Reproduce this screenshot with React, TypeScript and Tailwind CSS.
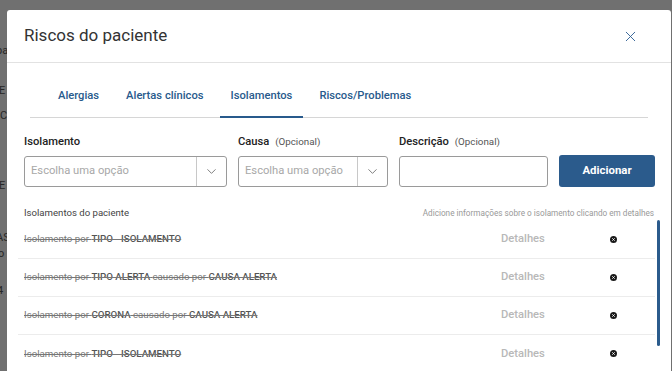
import { ChevronDown, X } from "lucide-react";

const rows = [
  { tipo: "TIPO - ISOLAMENTO", causa: null },
  { tipo: "TIPO ALERTA", causa: "CAUSA ALERTA" },
  { tipo: "CORONA", causa: "CAUSA ALERTA" },
  { tipo: "TIPO - ISOLAMENTO", causa: null },
];

const tabs = ["Alergias", "Alertas clínicos", "Isolamentos", "Riscos/Problemas"];

function Select({ width }: { width: string }) {
  return (
    <div
      className={`flex h-[31px] ${width} items-stretch rounded-[3px] border border-[#9a9a9a] bg-white`}
    >
      <span className="flex flex-1 items-center pl-[6px] text-[11.2px] text-[#a8a8a8]">
        Escolha uma opção
      </span>
      <span className="flex w-[30px] items-center justify-center border-l border-[#c8c8c8] text-[#555]">
        <ChevronDown size={15} strokeWidth={1.2} />
      </span>
    </div>
  );
}

function RemoveIcon() {
  return (
    <svg width="7" height="7" viewBox="0 0 8 8">
      <circle cx="4" cy="4" r="4" fill="#1a1a1a" />
      <path d="M2.6 2.6 5.4 5.4 M5.4 2.6 2.6 5.4" stroke="#fff" strokeWidth="1" />
    </svg>
  );
}

export default function App() {
  return (
    <div className="flex h-[371px] w-[672px] items-start overflow-hidden bg-[#707070] font-['Roboto',sans-serif]">
      {/* page behind the overlay */}
      <div className="relative h-[371px] w-[7px] shrink-0 overflow-hidden text-[11px] text-[#262626]">
        <span className="absolute left-[-4px] top-[43px]">pa</span>
        <span className="absolute left-[-1px] top-[83px]">E</span>
        <span className="absolute left-[-3px] top-[108px]">IC</span>
        <span className="absolute left-[-1px] top-[178px]">E</span>
        <span className="absolute left-[-4px] top-[230px]">AS</span>
        <span className="absolute left-[-2px] top-[246px]">o</span>
        <span className="absolute left-[-3px] top-[283px]">4</span>
      </div>

      <div className="mt-[10px] w-[664px] shrink-0 rounded-t-[3px] bg-white">
        <header className="flex h-[53px] items-center justify-between border-b border-[#e2e2e2] pl-[17px] pr-[32px]">
          <h1 className="text-[17px] text-[#333]">Riscos do paciente</h1>
          <X size={17} strokeWidth={1.3} className="text-[#2e5f93]" />
        </header>

        <nav className="mx-[23px] mt-[25px] flex gap-[5px] border-b border-[#d6d6d6] pl-[17px]">
          {tabs.map((tab) => (
            <span
              key={tab}
              className={`px-[11px] pb-[11px] text-[11.2px] font-medium text-[#285a8c] ${
                tab === "Isolamentos" ? "-mb-px border-b-2 border-[#285a8c]" : ""
              }`}
            >
              {tab}
            </span>
          ))}
        </nav>

        <div className="mt-[16px] flex items-end gap-[11px] pl-[17px]">
          <label className="flex flex-col gap-[5px]">
            <span className="text-[11.2px] font-medium text-[#222]">Isolamento</span>
            <Select width="w-[203px]" />
          </label>
          <label className="flex flex-col gap-[5px]">
            <span className="text-[11.2px] font-medium text-[#222]">
              Causa <span className="ml-[3px] text-[9.8px] font-normal text-[#555]">(Opcional)</span>
            </span>
            <Select width="w-[150px]" />
          </label>
          <label className="flex flex-col gap-[5px]">
            <span className="text-[11.2px] font-medium text-[#222]">
              Descrição <span className="ml-[3px] text-[9.8px] font-normal text-[#555]">(Opcional)</span>
            </span>
            <div className="h-[31px] w-[149px] rounded-[3px] border border-[#9a9a9a]" />
          </label>
          <button className="h-[32px] w-[96px] rounded-[3px] bg-[#2b5b8c] text-[11.4px] font-bold text-white">
            Adicionar
          </button>
        </div>

        <div className="mt-[19px] flex items-center justify-between pl-[17px] pr-[17px]">
          <span className="text-[9.6px] text-[#444]">Isolamentos do paciente</span>
          <span className="text-[8.2px] text-[#999]">
            Adicione informações sobre o isolamento clicando em detalhes
          </span>
        </div>

        <div className="mt-[1px] flex">
          <ul className="ml-[11px] w-[637px]">
            {rows.map((row, i) => (
              <li
                key={i}
                className="flex h-[38px] items-center border-b border-[#ececec] pl-[6px] text-[9.7px] text-[#777] last:border-b-0"
              >
                <span className="flex-1 line-through">
                  Isolamento por <span className="font-medium text-[#555]">{row.tipo}</span>
                  {row.causa ? (
                    <>
                      {" "}causado por <span className="font-medium text-[#555]">{row.causa}</span>
                    </>
                  ) : null}
                </span>
                <span className="w-[44px] text-[11.2px] font-medium text-[#b8b8b8]">Detalhes</span>
                <span className="ml-[65px] mr-[38px] flex">
                  <RemoveIcon />
                </span>
              </li>
            ))}
          </ul>
          <div className="ml-[2px] -mt-[1px]">
            <div className="h-[126px] w-[3px] rounded-full bg-[#2b5b8c]" />
          </div>
        </div>
      </div>
    </div>
  );
}
